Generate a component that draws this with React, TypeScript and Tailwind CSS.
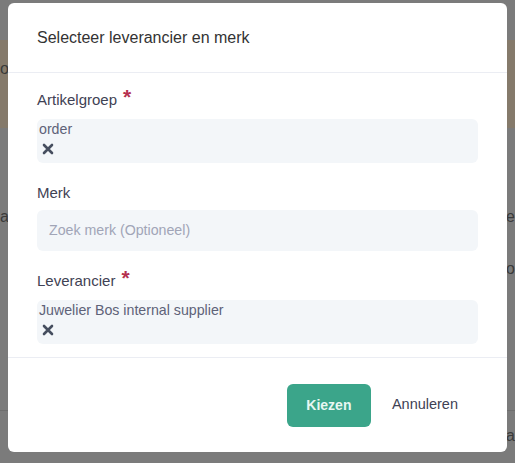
import type { ReactNode } from "react";

function Field({
  label,
  required,
  children,
}: {
  label: string;
  required?: boolean;
  children: ReactNode;
}) {
  return (
    <div>
      <div className="flex h-[20px] items-center text-[15px] text-[#3f4254]">
        {label}
        {required && (
          <span className="ml-[6px] -mt-[7px] text-[21px] font-bold leading-none text-[#b5304f]">*</span>
        )}
      </div>
      {children}
    </div>
  );
}

function Chip({ text }: { text: string }) {
  return (
    <div className="mt-[9px] h-[44px] rounded-[6px] bg-[#f3f6f9] px-[2px] pt-[2px] text-[14.2px] text-[#5e6278]">
      <div className="leading-[17px]">{text}</div>
      <svg className="ml-[3px] mt-[5px]" width="12" height="12" viewBox="0 0 12 12">
        <path d="M2 2 L10 10 M10 2 L2 10" stroke="#464e5f" strokeWidth="2.6" strokeLinecap="round" />
      </svg>
    </div>
  );
}

export default function App() {
  return (
    <div
      className="relative h-[463px] w-[515px] overflow-hidden bg-[#7b7b7b]"
      style={{ fontFamily: '"Liberation Sans", Arial, sans-serif' }}
    >
      {/* dimmed page behind the modal */}
      <div className="absolute left-0 right-0 top-[40px] h-[88px] bg-[#857a6b]" />
      <div className="absolute left-0 top-[57px] text-[16px] text-[#3a3a3a]">ot</div>
      <div className="absolute right-0 top-[205px] text-[16px] text-[#3a3a3a]">e</div>
      <div className="absolute right-0 top-[257px] text-[16px] text-[#3a3a3a]">o</div>
      <div className="absolute left-0 top-[205px] text-[16px] text-[#3a3a3a]">a</div>
      <div className="absolute right-0 top-[424px] text-[16px] text-[#3a3a3a]">a</div>
      <div className="absolute left-0 right-0 top-[410px] h-px bg-[#6e6e6e]" />

      {/* modal */}
      <div className="absolute left-[8px] top-[3px] flex h-[449px] w-[499px] flex-col rounded-[6px] bg-white">
        <div className="flex h-[70px] items-center border-b border-[#ebedf3] px-[29px] pt-[1px] text-[16px] text-[#333]">
          Selecteer leverancier en merk
        </div>
        <div className="flex flex-col gap-[20px] border-b border-[#ebedf3] px-[29px] pb-[13px] pt-[17px]">
          <Field label="Artikelgroep" required>
            <Chip text="order" />
          </Field>
          <Field label="Merk">
            <div className="mt-[7px] flex h-[41px] items-center rounded-[6px] bg-[#f3f6f9] px-[12px] text-[14.2px] text-[#a1a5b7]">
              Zoek merk (Optioneel)
            </div>
          </Field>
          <Field label="Leverancier" required>
            <Chip text="Juwelier Bos internal supplier" />
          </Field>
        </div>
        <div className="flex flex-1 items-center justify-end gap-[21px] px-[49px]">
          <button className="h-[43px] w-[84px] rounded-[6px] bg-[#3ba58a] text-[14px] font-bold text-[#e8f7f2]">
            Kiezen
          </button>
          <span className="text-[14.5px] text-[#3f4254]">Annuleren</span>
        </div>
      </div>
    </div>
  );
}
